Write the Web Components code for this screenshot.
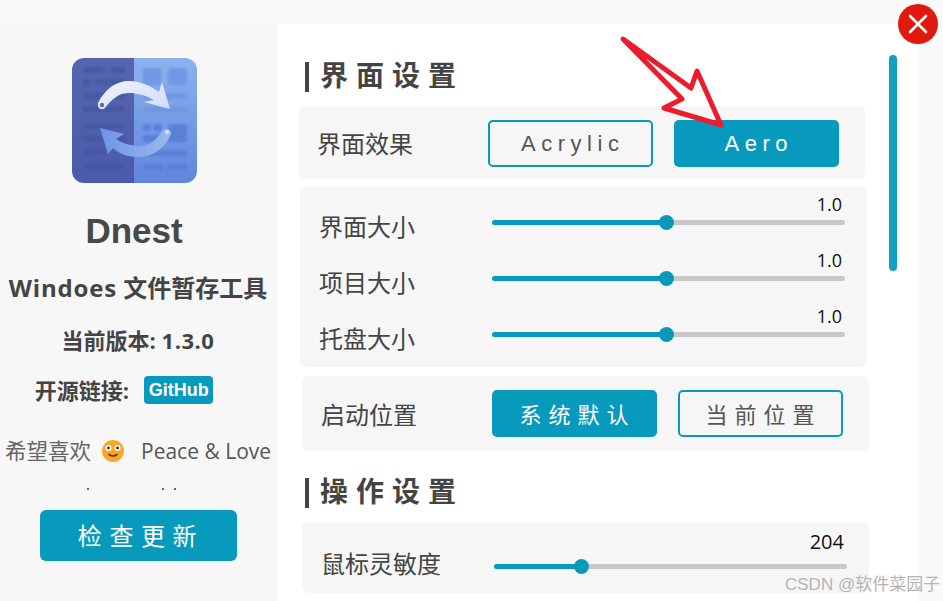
<!DOCTYPE html>
<html lang="zh">
<head>
<meta charset="utf-8">
<title>Dnest</title>
<style>
  html, body { margin: 0; padding: 0; background: #fafafa; }
  body { font-family: "Open Sans", "Noto Sans CJK SC", sans-serif; color: #444; }
</style>
</head>
<body>
<dnest-window>
  <about-side slot="side"></about-side>
  <section-title>界面设置</section-title>
  <setting-card style="margin:14px 0 0 22px;height:73px;padding-top:2px">
    <choice-row label="界面效果" left="19">
      <choice-button outline latin>Acrylic</choice-button>
      <choice-button latin>Aero</choice-button>
    </choice-row>
  </setting-card>
  <setting-card style="margin:7px 0 0 23px;height:181px;width:567px;padding-top:6px">
    <value-slider label="界面大小" value="1.0" pct="49.3"></value-slider>
    <value-slider label="项目大小" value="1.0" pct="49.3"></value-slider>
    <value-slider label="托盘大小" value="1.0" pct="49.3"></value-slider>
  </setting-card>
  <setting-card style="margin:9px 0 0 25px;height:75px;width:567px;--nudge:2px">
    <choice-row label="启动位置" left="20">
      <choice-button>系统默认</choice-button>
      <choice-button outline>当前位置</choice-button>
    </choice-row>
  </setting-card>
  <section-title style="margin-top:27px">操作设置</section-title>
  <setting-card style="margin:14px 0 0 25px;height:71px;width:567px;padding-top:8px">
    <value-slider wide label="鼠标灵敏度" value="204" pct="24.9"></value-slider>
  </setting-card>
</dnest-window>

<script>
class DnestWindow extends HTMLElement {
  constructor() {
    super();
    this.shadowDOM = this.attachShadow({ mode: "open" });
  }

  connectedCallback() {
    this.shadowDOM.innerHTML = `
      <style>
        :host { display: block; position: relative; width: 943px; height: 601px; overflow: hidden; background: #fafafa; }
        .frame { display: flex; height: 100%; }
        .main { width: 641px; margin-top: 24px; background: #fff; display: flex; flex-direction: column; align-items: flex-start; }
        .bar { position: absolute; left: 889px; top: 55px; width: 8px; height: 216px; border-radius: 4px; background: #10a0c0; }
        .close { position: absolute; left: 898px; top: 4px; width: 40px; height: 40px; }
        .arrow { position: absolute; left: 610px; top: 28px; }
        .mark { position: absolute; left: 785px; top: 575px; font: 17px/20px "Liberation Sans", "Noto Sans CJK SC", sans-serif; color: #b4b4b4; white-space: nowrap; }
      </style>
      <div class="frame">
        <slot name="side"></slot>
        <div class="main"><slot></slot></div>
      </div>
      <div class="bar"></div>
      <svg class="arrow" width="125" height="110" viewBox="610 28 125 110" fill="none">
        <path d="M623 39 691 88 697 71 721 125 664 108 682 99Z" stroke="#ec1c2c" stroke-width="5" stroke-linejoin="round"/>
      </svg>
      <svg class="close" viewBox="0 0 40 40">
        <circle cx="20" cy="20" r="20" fill="#e01a0e"/>
        <path d="M12 12 28 28M28 12 12 28" stroke="#fff" stroke-width="2.6" stroke-linecap="round"/>
      </svg>
      <div class="mark">CSDN @软件菜园子</div>`;
  }
}

class AboutSide extends HTMLElement {
  constructor() {
    super();
    this.shadowDOM = this.attachShadow({ mode: "open" });
  }

  connectedCallback() {
    this.shadowDOM.innerHTML = `
      <style>
        :host { display: flex; flex-direction: column; align-items: center; box-sizing: border-box; width: 277px; height: 577px; margin-top: 24px; padding-top: 34px; background: #f7f7f8; color: #444; white-space: nowrap; }
        .logo { display: block; margin-left: -9px; }
        .name { margin: 24px 0 0 -9px; font: bold 35px/48px "Liberation Sans", "Noto Sans CJK SC", sans-serif; color: #484848; }
        .sub { margin: 17px 0 0 -1px; font: bold 24px/32px "Open Sans", "Noto Sans CJK SC", sans-serif; }
        .sub span { letter-spacing: .8px; }
        .ver { margin: 20px 0 0 -1px; font: bold 22px/32px "Open Sans", "Noto Sans CJK SC", sans-serif; }
        .ver span { letter-spacing: .5px; }
        .link { display: flex; align-items: center; gap: 15px; height: 28px; margin: 20px 0 0 -29px; font: bold 22px/28px "Open Sans", "Noto Sans CJK SC", sans-serif; }
        .badge { width: 69px; height: 28px; border-radius: 4px; background: #079abc; color: #fff; font: bold 18px/28px "Liberation Sans", sans-serif; text-align: center; }
        .like { display: flex; align-items: center; align-self: flex-start; height: 32px; margin: 31px 0 0 5px; font: 21.5px/32px "Open Sans", "Noto Sans CJK SC", sans-serif; color: #666; }
        .like svg { margin: 0 17px 0 11px; }
        .like span:last-child { color: #555; font-size: 21px; }
        .cut { align-self: flex-start; display: flex; height: 3px; margin: 21px 0 0 87px; gap: 10px; }
        .cut i { width: 2px; height: 2px; background: #666; }
        .cut i:first-child { margin-right: 63px; }
        .update { width: 197px; height: 51px; margin: 19px 0 0 -1px; border-radius: 6px; background: #079abc; color: #fff; font: 24px/49px "Noto Sans CJK SC", sans-serif; letter-spacing: 7.6px; text-indent: 6px; text-align: center; }
      </style>
      <svg class="logo" width="125" height="125" viewBox="0 0 125 125">
        <defs>
          <clipPath id="r"><rect width="125" height="125" rx="12"/></clipPath>
          <linearGradient id="a" x1="0" y1="0" x2="0" y2="1"><stop offset="0" stop-color="#5566b0"/><stop offset="1" stop-color="#4b5aaa"/></linearGradient>
          <linearGradient id="b" x1="0" y1="0" x2="0" y2="1"><stop offset="0" stop-color="#8cb3ef"/><stop offset="1" stop-color="#5f85dc"/></linearGradient>
          <linearGradient id="c" x1="0" y1="0" x2="1" y2="1"><stop offset="0" stop-color="#f0f3fb"/><stop offset="1" stop-color="#d0ddf7"/></linearGradient>
          <linearGradient id="d" x1="0" y1="0" x2="1" y2="0"><stop offset="0" stop-color="#6c94e6"/><stop offset="1" stop-color="#9db9ef"/></linearGradient>
          <filter id="s"><feGaussianBlur stdDeviation=".8"/></filter>
          <filter id="t"><feGaussianBlur stdDeviation=".35"/></filter>
        </defs>
        <g clip-path="url(#r)">
          <rect width="62" height="125" fill="url(#a)"/>
          <rect x="62" width="63" height="125" fill="url(#b)"/>
          <g fill="#46549f" fill-opacity=".75" filter="url(#s)">
            <rect x="11" y="9" width="21" height="6" rx="2"/><rect x="39" y="9" width="15" height="6" rx="2"/>
            <rect x="11" y="21" width="8" height="7" rx="3"/><rect x="23" y="21" width="30" height="6" rx="2"/>
            <rect x="11" y="35" width="42" height="6" rx="2"/><rect x="11" y="48" width="42" height="6" rx="2"/>
            <rect x="11" y="65" width="42" height="6" rx="2"/><rect x="11" y="78" width="42" height="6" rx="2"/>
            <rect x="11" y="91" width="22" height="6" rx="2"/><rect x="11" y="105" width="42" height="6" rx="2"/>
          </g>
          <g fill="#6d94e2" fill-opacity=".8" filter="url(#s)">
            <rect x="71" y="10" width="18" height="17" rx="2"/><rect x="96" y="10" width="19" height="17" rx="2"/>
            <rect x="72" y="35" width="43" height="6" rx="2"/><rect x="72" y="49" width="43" height="6" rx="2"/>
          </g>
          <g fill="#5279d4" fill-opacity=".75" filter="url(#s)">
            <rect x="71" y="66" width="8" height="7" rx="1"/><rect x="82" y="66" width="8" height="7" rx="1"/>
            <rect x="71" y="77" width="19" height="7" rx="1"/><rect x="96" y="66" width="19" height="18" rx="2"/>
            <rect x="72" y="92" width="43" height="6" rx="2"/><rect x="72" y="106" width="19" height="6" rx="2"/><rect x="95" y="106" width="20" height="6" rx="2"/>
          </g>
          <g filter="url(#t)">
            <path d="M26 45C33 31 44 23 57 23 68 23 77 27 87 34L90 24 98 51 72 44 82 42C73 37 65 35 57 35 47 35 40 41 33 50 29 53 25 50 26 45Z" fill="url(#c)"/>
            <circle cx="30" cy="47" r="2.2" fill="#5a6bb5"/>
            <path d="M99 76C93 91 80 99 67 99 56 99 47 96 41 90L36 96 28 70 52 76 44 81C52 86 60 88 68 88 78 88 85 81 91 72 95 70 100 72 99 76Z" fill="url(#d)"/>
            <circle cx="95" cy="74" r="2" fill="#dce6fa"/>
          </g>
        </g>
      </svg>
      <div class="name">Dnest</div>
      <div class="sub"><span>Windoes</span> 文件暂存工具</div>
      <div class="ver">当前版本: <span>1.3.0</span></div>
      <div class="link"><span>开源链接:</span><span class="badge">GitHub</span></div>
      <div class="like">
        <span>希望喜欢</span>
        <svg width="22" height="22" viewBox="0 0 22 22">
          <circle cx="11" cy="11" r="11" fill="#f9a72b"/>
          <circle cx="6.5" cy="8" r="3" fill="#fff"/><circle cx="15.5" cy="8" r="3" fill="#fff"/>
          <circle cx="6.5" cy="8" r="1.4" fill="#3a2a18"/><circle cx="15.5" cy="8" r="1.4" fill="#3a2a18"/>
          <path d="M7 14.5Q11 17.5 15 14.5" stroke="#5a3413" stroke-width="1.6" fill="none" stroke-linecap="round"/>
        </svg>
        <span>Peace &amp; Love</span>
      </div>
      <div class="cut"><i></i><i></i><i></i></div>
      <div class="update">检查更新</div>`;
  }
}

class SectionTitle extends HTMLElement {
  constructor() {
    super();
    this.shadowDOM = this.attachShadow({ mode: "open" });
  }

  connectedCallback() {
    this.shadowDOM.innerHTML = `
      <style>
        :host { display: block; box-sizing: border-box; height: 30px; margin: 38px 0 0 28px; padding-left: 11px; border-left: 4px solid #444; font: bold 28px/24px "Noto Sans CJK SC", sans-serif; letter-spacing: 8px; color: #444; }
      </style>
      <slot></slot>`;
  }
}

class SettingCard extends HTMLElement {
  constructor() {
    super();
    this.shadowDOM = this.attachShadow({ mode: "open" });
  }

  connectedCallback() {
    this.shadowDOM.innerHTML = `
      <style>
        :host { display: block; box-sizing: border-box; width: 566px; border-radius: 6px; background: #f6f6f6; }
      </style>
      <slot></slot>`;
  }
}

class ChoiceRow extends HTMLElement {
  constructor() {
    super();
    this.shadowDOM = this.attachShadow({ mode: "open" });
  }

  connectedCallback() {
    const left = this.getAttribute("left") || 20;
    this.shadowDOM.innerHTML = `
      <style>
        :host { display: flex; align-items: center; gap: 21px; box-sizing: border-box; height: 100%; padding: 0 0 0 ${left}px; font: 24px/32px "Noto Sans CJK SC", sans-serif; color: #444; }
        .label { width: 149px; margin-left: -1px; margin-right: 1px; white-space: nowrap; margin-top: var(--nudge, 0); margin-bottom: 2px; }
      </style>
      <div class="label">${this.getAttribute("label")}</div>
      <slot></slot>`;
  }
}

class ChoiceButton extends HTMLElement {
  constructor() {
    super();
    this.shadowDOM = this.attachShadow({ mode: "open" });
  }

  connectedCallback() {
    const latin = this.hasAttribute("latin");
    const family = latin ? '"Liberation Sans"' : '"Noto Sans CJK SC"';
    const gap = latin ? 5.5 : 7;
    this.shadowDOM.innerHTML = `
      <style>
        :host { display: block; box-sizing: border-box; width: 165px; height: 47px; border: 2px solid #079abc; border-radius: 5px; background: #079abc; color: #fff; font: 22px/43px ${family}, sans-serif; letter-spacing: ${gap}px; text-indent: ${gap - 1}px; text-align: center; white-space: nowrap; }
        :host([outline]) { background: transparent; color: #555; }
      </style>
      <slot></slot>`;
  }
}

class ValueSlider extends HTMLElement {
  constructor() {
    super();
    this.shadowDOM = this.attachShadow({ mode: "open" });
  }

  connectedCallback() {
    const pct = this.getAttribute("pct");
    this.shadowDOM.innerHTML = `
      <style>
        :host { display: grid; grid-template-columns: 172px 353px; height: 56px; padding-left: 20px; color: #444; }
        .label { margin: 18px 0 0 -1px; font: 24px/32px "Noto Sans CJK SC", sans-serif; white-space: nowrap; }
        .value { height: 24px; padding-right: 3px; font: 18px/24px "Open Sans", sans-serif; color: #111; text-align: right; }
        .track { position: relative; height: 5px; margin-top: 4px; border-radius: 3px; background: #c8c8c8; }
        .fill { height: 100%; border-radius: 3px; background: #079abc; width: ${pct}%; }
        .thumb { position: absolute; left: ${pct}%; top: 50%; width: 15px; height: 15px; margin: -7.5px 0 0 -7.5px; border-radius: 50%; background: #079abc; }
        :host([wide]) .value { font-size: 20px; }
        :host([wide]) .track { margin-top: 10px; }
        :host([wide]) .label { margin-top: 17px; }
      </style>
      <div class="label">${this.getAttribute("label")}</div>
      <div>
        <div class="value">${this.getAttribute("value")}</div>
        <div class="track"><div class="fill"></div><div class="thumb"></div></div>
      </div>`;
  }
}

customElements.define("dnest-window", DnestWindow);
customElements.define("about-side", AboutSide);
customElements.define("section-title", SectionTitle);
customElements.define("setting-card", SettingCard);
customElements.define("choice-row", ChoiceRow);
customElements.define("choice-button", ChoiceButton);
customElements.define("value-slider", ValueSlider);
</script>
</body>
</html>
